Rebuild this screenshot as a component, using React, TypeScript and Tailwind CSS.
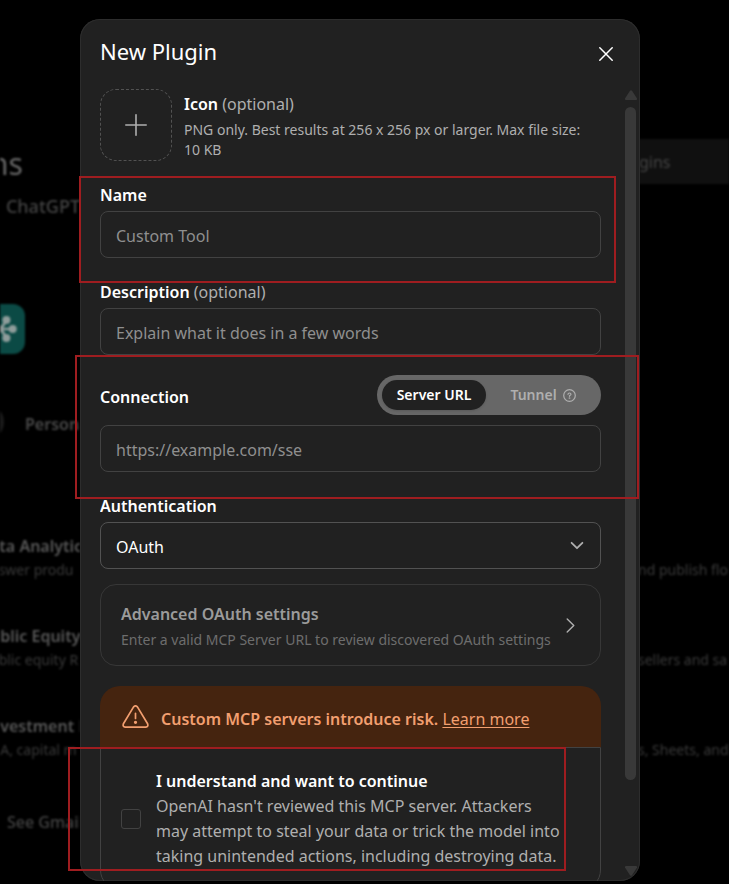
import type { ReactNode } from "react";

const fieldClass =
  "block h-[47px] w-full rounded-lg border border-[#424242] bg-transparent px-[15px] pt-0.5 text-base text-white placeholder:text-[#8f8f8f] placeholder:opacity-100 outline-none";

function Field({
  id,
  label,
  optional,
  children,
}: {
  id: string;
  label: string;
  optional?: boolean;
  children: ReactNode;
}) {
  return (
    <div className="flex flex-col gap-1">
      <label htmlFor={id} className="text-base leading-6 font-semibold text-white">
        {label}
        {optional && <span className="font-normal text-[#afafaf]"> (optional)</span>}
      </label>
      {children}
    </div>
  );
}

const plugins = [
  { title: "ata Analytics", text: "nswer produ", end: "nd publish flo" },
  { title: "ublic Equity", text: "ublic equity R", end: "sellers and sa" },
  { title: "nvestment B", text: "&A, capital m", end: "s, Sheets, and" },
];

function Backdrop() {
  return (
    <div className="absolute inset-0 flex justify-between overflow-hidden text-nowrap blur-[1px]" aria-hidden="true">
      <div className="flex w-20 flex-col overflow-hidden">
        <p className="mt-[146px] -ml-[10px] h-9 text-3xl leading-9 text-[#686868]">ns</p>
        <p className="mt-3 flex h-6 justify-end text-lg leading-6 font-medium text-[#444]">n ChatGPT</p>
        <div className="mt-[86px] -ml-6 flex h-[50px] w-[49px] items-center justify-center rounded-xl bg-[#0b4a45]">
          <svg viewBox="0 0 40 40" className="size-9" fill="#8f9d9b" stroke="#8f9d9b" strokeWidth="3">
            <path d="M20 20H33M20 20L26 10M20 20L26 30M20 20H7M20 20L14 10M20 20L14 30" />
            <circle cx="33" cy="20" r="3" />
            <circle cx="26" cy="10" r="3" />
            <circle cx="26" cy="30" r="3" />
            <circle cx="7" cy="20" r="3" />
            <circle cx="14" cy="10" r="3" />
            <circle cx="14" cy="30" r="3" />
          </svg>
        </div>
        <div className="mt-[50px] -ml-8 flex h-9 items-center gap-[21px]">
          <span className="size-9 shrink-0 rounded-full bg-[#1b1b1b]" />
          <span className="pt-1 text-base font-semibold text-[#4a4a4a]">Personal</span>
        </div>
        <div className="mt-[94px] flex flex-col gap-[42px]">
          {plugins.map((p) => (
            <div key={p.title} className="-ml-[10px]">
              <p className="text-base leading-6 font-semibold text-[#585858]">{p.title}</p>
              <p className="text-sm leading-6 text-[#3a3a3a]">{p.text}</p>
            </div>
          ))}
        </div>
        <p className="mt-12 pl-[7px] text-base leading-6 font-medium text-[#444]">See Gmail</p>
      </div>
      <div className="flex w-[91px] flex-col overflow-hidden">
        <div className="mt-[139px] flex h-[45px] items-center bg-[#101010] pl-px text-base text-[#444]">gins</div>
        <div className="mt-[374px] flex flex-col gap-[66px]">
          {plugins.map((p) => (
            <p key={p.end} className="text-sm leading-6 text-[#3a3a3a]">{p.end}</p>
          ))}
        </div>
      </div>
    </div>
  );
}

function Scrollbar() {
  return (
    <div className="flex w-[11px] shrink-0 flex-col items-center" aria-hidden="true">
      <svg viewBox="0 0 12 10" className="mt-px h-[10px] w-3" fill="#393939">
        <path d="M5 .8Q6-.4 7 .8L12 8.4Q12.4 10 11 10H1Q-.4 10 0 8.4Z" />
      </svg>
      <div className="mt-[7px] h-[673px] w-full rounded-full bg-[#393939]" />
      <svg viewBox="0 0 12 10" className="mt-auto mb-[5px] h-[10px] w-3 shrink-0" fill="#393939">
        <path d="M5 9.2Q6 10.4 7 9.2L12 1.6Q12.4 0 11 0H1Q-.4 0 0 1.6Z" />
      </svg>
    </div>
  );
}

function Dialog() {
  return (
    <div
      role="dialog"
      aria-labelledby="dialog-title"
      className="relative flex h-full w-full max-w-[560px] flex-col overflow-hidden rounded-[20px] bg-[#212121] inset-ring inset-ring-[#2d2d2d]"
    >
      <header className="flex h-[70px] shrink-0 items-center justify-between pr-[23px] pl-5">
        <h2 id="dialog-title" className="pb-1.5 text-[22px] leading-7 text-white">New Plugin</h2>
        <button type="button" aria-label="Close" className="flex size-[22px] items-center justify-center">
          <svg viewBox="0 0 14 14" className="size-[14px]" fill="none" stroke="#fff" strokeWidth="1.5" strokeLinecap="round">
            <path d="M.8.8 13.2 13.2M13.2.8.8 13.2" />
          </svg>
        </button>
      </header>
      <div className="flex min-h-0 flex-1 gap-6 pr-1 pl-5">
        <form className="flex min-w-0 flex-1 flex-col overflow-hidden *:shrink-0">
          <div className="flex gap-3">
            <button
              type="button"
              aria-label="Add icon"
              className="flex size-[72px] shrink-0 items-center justify-center rounded-2xl border border-dashed border-[#525252]"
            >
              <svg viewBox="0 0 22 22" className="size-[22px]" stroke="#afafaf" strokeWidth="1.6" strokeLinecap="round">
                <path d="M11 .8V21.2M.8 11H21.2" />
              </svg>
            </button>
            <div className="pt-[3px] pr-3">
              <p className="text-base leading-6 font-semibold text-white">
                Icon <span className="font-normal text-[#afafaf]">(optional)</span>
              </p>
              <p className="mt-1 text-sm leading-5 text-[#afafaf]">
                PNG only. Best results at 256 x 256 px or larger. Max file size: 10&nbsp;KB
              </p>
            </div>
          </div>
          <div className="mt-[22px]">
            <Field id="name" label="Name">
              <input id="name" placeholder="Custom Tool" className={fieldClass} />
            </Field>
          </div>
          <div className="mt-[22px]">
            <Field id="description" label="Description" optional>
              <input id="description" placeholder="Explain what it does in a few words" className={fieldClass} />
            </Field>
          </div>
          <div className="mt-5 flex flex-col gap-[10px]">
            <div className="flex items-center justify-between">
              <label htmlFor="connection" className="pt-1 text-base leading-6 font-semibold text-white">Connection</label>
              <div className="flex h-10 w-[224px] rounded-full bg-[#676767] p-[5px] text-sm font-semibold">
                <button type="button" className="w-[104px] rounded-full bg-[#212121] text-white shadow-sm">Server URL</button>
                <button type="button" className="flex flex-1 items-center justify-center gap-[6px] pl-1 text-[#afafaf]">
                  Tunnel
                  <svg viewBox="0 0 13 13" className="size-[13px]" fill="none" stroke="currentColor" strokeWidth="1.2">
                    <circle cx="6.5" cy="6.5" r="5.8" />
                    <path d="M5 5.3Q5.1 4 6.5 4T8 5.2Q8 6 6.5 6.7V7.3" strokeLinecap="round" />
                    <circle cx="6.5" cy="9.1" r=".3" />
                  </svg>
                </button>
              </div>
            </div>
            <input id="connection" placeholder="https://example.com/sse" className={fieldClass} />
          </div>
          <div className="mt-[22px]">
            <Field id="auth" label="Authentication">
              <div className="relative">
                <select
                  id="auth"
                  className="block h-[47px] w-full appearance-none rounded-lg border border-[#525252] bg-transparent px-[15px] pt-0.5 text-base text-white outline-none"
                >
                  <option>OAuth</option>
                </select>
                <svg
                  viewBox="0 0 14 9"
                  className="pointer-events-none absolute top-[19px] right-[17px] h-[9px] w-[14px]"
                  fill="none"
                  stroke="#afafaf"
                  strokeWidth="1.8"
                  strokeLinecap="round"
                  strokeLinejoin="round"
                >
                  <path d="M1.6 1.8 7 7.2 12.4 1.8" />
                </svg>
              </div>
            </Field>
          </div>
          <button
            type="button"
            className="mt-[15px] flex h-[82px] items-center justify-between rounded-2xl border border-[#373737] pr-[25px] pl-5 text-left"
          >
            <span className="pt-0.5">
              <span className="block text-base leading-7 font-semibold text-[#9b9b9b]">Advanced OAuth settings</span>
              <span className="block text-sm leading-6 text-[#6d6d6d]">
                Enter a valid MCP Server URL to review discovered OAuth settings
              </span>
            </span>
            <svg
              viewBox="0 0 9 15"
              className="h-[15px] w-[9px] shrink-0"
              fill="none"
              stroke="#afafaf"
              strokeWidth="1.4"
              strokeLinecap="round"
              strokeLinejoin="round"
            >
              <path d="M1.2 1 7.8 7.5 1.2 14" />
            </svg>
          </button>
          <div className="mt-5 flex h-[61px] items-center gap-3 rounded-t-[20px] bg-[#45240f] px-[22px] pt-1 text-[#f29f70]">
            <svg
              viewBox="0 0 27 23"
              className="mb-1 h-[23px] w-[27px] shrink-0"
              fill="none"
              stroke="currentColor"
              strokeWidth="1.7"
              strokeLinecap="round"
              strokeLinejoin="round"
            >
              <path d="M11.6 1.9Q13.5-.3 15.4 1.9L25.6 18.7Q26.6 21.8 23.8 22.1H3.2Q.4 21.8 1.4 18.7Z" />
              <path d="M13.5 8.4V13.4" />
              <circle cx="13.5" cy="17.3" r=".8" fill="currentColor" />
            </svg>
            <p className="text-base leading-6 font-semibold">
              Custom MCP servers introduce risk.{" "}
              <a href="#learn" className="font-normal underline underline-offset-2">Learn more</a>
            </p>
          </div>
          <label className="flex h-[143px] items-center gap-[15px] rounded-b-[20px] border border-[#424242] pr-9 pl-5">
            <input type="checkbox" className="size-5 shrink-0 appearance-none rounded-[3px] border border-[#424242]" />
            <span className="text-base leading-[25px] text-[#afafaf]">
              <span className="block font-semibold text-white">I understand and want to continue</span>
              OpenAI hasn't reviewed this MCP server. Attackers may attempt to steal your data or trick the model into
              taking unintended actions, including destroying data.
            </span>
          </label>
        </form>
        <Scrollbar />
      </div>
    </div>
  );
}

export default function App() {
  return (
    <main className="relative h-screen overflow-hidden bg-black font-['Noto_Sans',sans-serif]">
      <Backdrop />
      <div className="h-full pt-[19px] pr-[89px] pb-[3px] pl-20">
        <Dialog />
      </div>
      <div className="pointer-events-none absolute top-[176px] left-[79px] h-[107px] w-[537px] border-2 border-[#9f1d20]" />
      <div className="pointer-events-none absolute top-[355px] left-[75px] h-[144px] w-[564px] border-2 border-[#9f1d20]" />
      <div className="pointer-events-none absolute top-[747px] left-[68px] h-[124px] w-[498px] border-2 border-[#9f1d20]" />
    </main>
  );
}
